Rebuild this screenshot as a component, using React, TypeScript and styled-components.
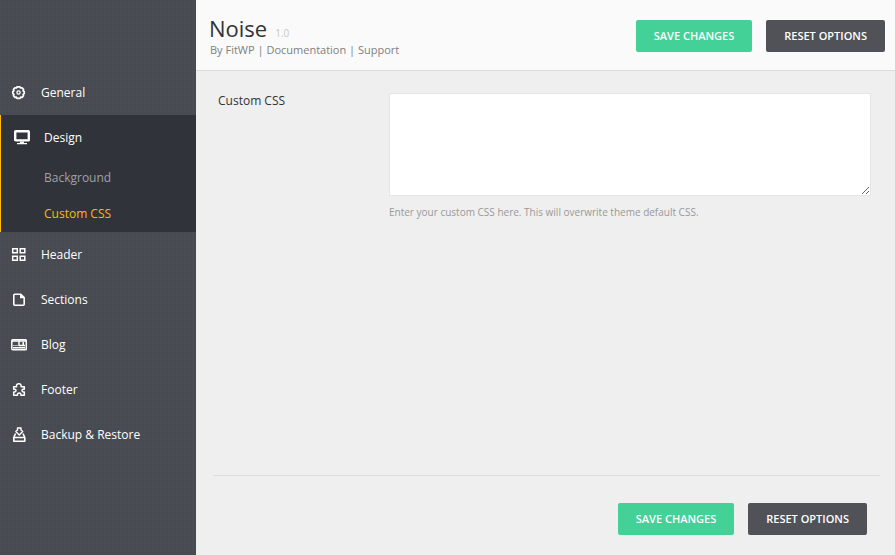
import React from "react";
import styled, { createGlobalStyle } from "styled-components";

const GlobalStyle = createGlobalStyle`
  *, *::before, *::after { box-sizing: border-box; }
  body {
    margin: 0;
    background: #efefef;
    font-family: "Open Sans", "Noto Sans", sans-serif;
    font-size: 12px;
    color: #333;
  }
`;

const Layout = styled.div`
  display: flex;
  min-height: 100vh;
`;

const Sidebar = styled.nav`
  flex: 0 0 196px;
  padding-top: 70px;
  background-color: #4a4c54;
  background-image: conic-gradient(#474951 25%, transparent 0);
  background-size: 4px 4px;
`;

const Menu = styled.ul`
  list-style: none;
  margin: 0;
  padding: 0;
`;

const MenuItem = styled.li<{ $open?: boolean }>`
  ${(p) => p.$open && "background: #31333b; border-left: 1px solid #ffba00;"}
`;

const MenuLink = styled.a<{ $open?: boolean }>`
  display: flex;
  align-items: center;
  gap: 14px;
  height: 45px;
  padding-left: ${(p) => (p.$open ? 12 : 10)}px;
  color: #fff;
  font-weight: 500;
  text-decoration: none;

  svg { flex: none; }
`;

const SubLink = styled.a<{ $current?: boolean }>`
  display: flex;
  align-items: center;
  height: 36px;
  padding: 0 0 2px 43px;
  color: ${(p) => (p.$current ? "#ffba00" : "#a0a1a5")};
  text-decoration: none;
`;

const Main = styled.main`
  flex: 1;
  min-width: 0;
  display: flex;
  flex-direction: column;
`;

const Header = styled.header`
  display: flex;
  justify-content: space-between;
  align-items: flex-start;
  padding: 14px 10px 12px 13px;
  background: #fafafa;
  border-bottom: 1px solid #dcdcdc;
`;

const Title = styled.h1`
  margin: 0;
  font-size: 22px;
  line-height: 28px;
  font-weight: 400;
  color: #333;
`;

const Version = styled.small`
  margin-left: 8px;
  font-size: 10px;
  line-height: 1;
  color: #c8c8c8;
`;

const Links = styled.div`
  padding-left: 1px;
  font-size: 11px;
  line-height: 16px;
  color: #808080;

  a { color: inherit; text-decoration: none; }
`;

const Actions = styled.div`
  display: flex;
  gap: 14px;
`;

const HeaderActions = styled(Actions)`
  padding-top: 6px;
`;

const Button = styled.button<{ $primary?: boolean }>`
  height: 32px;
  padding: 0 18px;
  border: 0;
  border-radius: 2px;
  background: ${(p) => (p.$primary ? "#44d197" : "#515258")};
  color: #fff;
  font: 600 11px/32px "Open Sans", "Noto Sans", sans-serif;
  white-space: nowrap;
  cursor: pointer;
`;

const Field = styled.div`
  display: flex;
  flex: 1;
  padding: 22px 24px 24px 22px;
`;

const Label = styled.label`
  flex: 0 0 171px;
  line-height: 16px;
  font-weight: 500;
`;

const Control = styled.div`
  flex: 1;
  min-width: 0;
`;

const TextArea = styled.textarea`
  display: block;
  width: 100%;
  height: 103px;
  padding: 8px;
  border: 1px solid #e5e5e5;
  background: #fff;
  font: inherit;
  resize: both;
`;

const Help = styled.p`
  margin: 8px 0 0;
  font-size: 10px;
  line-height: 16px;
  font-weight: 500;
  color: #999;
`;

const Footer = styled.footer`
  display: flex;
  justify-content: flex-end;
  margin: 0 15px 0 18px;
  padding: 27px 13px 20px;
  border-top: 1px solid #dcdcdc;
`;

type IconName = "gear" | "screen" | "grid" | "page" | "card" | "puzzle" | "backup";

const drawings: Record<IconName, React.ReactNode> = {
  gear: (
    <>
      <path
        d="M7 2.800h3l.6 1.200 1.500-.2 1.400 1.600-.4 1.400 1.100.8v2l-1.100.8.4 1.400-1.400 1.600-1.500-.2-.6 1.200H7l-.6-1.200-1.500.2-1.400-1.600.4-1.400-1.100-.8v-2l1.100-.8-.4-1.400 1.400-1.600 1.500.2z"
        strokeWidth="1.700"
        strokeLinejoin="round"
      />
      <circle cx="8.500" cy="8.500" r="1.600" strokeWidth="1.300" />
    </>
  ),
  screen: (
    <>
      <rect x="2.200" y="2.200" width="13.600" height="9.200" rx="0.500" strokeWidth="2.400" />
      <path d="M7 12.500h4v1.500H7zM4 14h10v1.200H4z" fill="#fff" stroke="none" />
    </>
  ),
  grid: (
    <path d="M2.700 2.700h4.600v4.100H2.700zM10.200 2.700h4.600v4.100h-4.600zM2.700 10.200h4.600v4.100H2.700zM10.200 10.200h4.600v4.100h-4.600z" strokeWidth="1.500" />
  ),
  page: (
    <>
      <path d="M4.800 3.300h6l3.400 3.400v6.500a1 1 0 0 1-1 1H4.800a1 1 0 0 1-1-1V4.300a1 1 0 0 1 1-1z" strokeWidth="1.600" />
      <path d="M10 3v4.200h4.500z" fill="#fff" stroke="none" />
    </>
  ),
  card: (
    <>
      <rect x="1.800" y="3.800" width="14.500" height="10" rx="1" strokeWidth="1.500" />
      <path d="M2 5h14M9 5v5M13.200 6v3M9 9.500h6M3 11.700h12" strokeWidth="1.500" />
      <path d="M3 9.500h5" strokeWidth="0.600" />
    </>
  ),
  puzzle: (
    <path
      d="M3.700 5.700h2.800V4.500a2.300 1.800 0 0 1 4.600 0v1.200h3.200v2.600h-1a1.300 1.300 0 0 0 0 2.600h1v3.400h-3.400v-1a1.500 1.200 0 0 0-3.400 0v1H3.700v-3.400h1a1.300 1.300 0 0 0 0-2.600h-1z"
      strokeWidth="1.500"
      strokeLinejoin="round"
    />
  ),
  backup: (
    <>
      <path d="M5.800 5.500L7.500 4V2h3.500v2l1.700 1.500-3.500 3.500z" strokeWidth="1.400" strokeLinejoin="round" />
      <path d="M5.500 7.500L3.800 11.500v3.700h11v-3.700L13 7.500M3.800 11.500h11" strokeWidth="1.600" strokeLinejoin="round" />
    </>
  ),
};

const Icon = ({ name }: { name: IconName }) => (
  <svg width="17" height="17" viewBox="0 0 17 17" fill="none" stroke="#fff" aria-hidden="true">
    {drawings[name]}
  </svg>
);

const items: { icon: IconName; label: string; children?: string[] }[] = [
  { icon: "gear", label: "General" },
  { icon: "screen", label: "Design", children: ["Background", "Custom CSS"] },
  { icon: "grid", label: "Header" },
  { icon: "page", label: "Sections" },
  { icon: "card", label: "Blog" },
  { icon: "puzzle", label: "Footer" },
  { icon: "backup", label: "Backup & Restore" },
];

const Buttons = () => (
  <>
    <Button type="submit" $primary>SAVE CHANGES</Button>
    <Button type="reset">RESET OPTIONS</Button>
  </>
);

export default function App() {
  return (
    <>
      <GlobalStyle />
      <Layout>
        <Sidebar>
          <Menu>
            {items.map(({ icon, label, children }) => (
              <MenuItem key={label} $open={!!children}>
                <MenuLink href="#" $open={!!children}>
                  <Icon name={icon} />
                  {label}
                </MenuLink>
                {children && (
                  <Menu>
                    {children.map((child) => (
                      <li key={child}>
                        <SubLink href="#" $current={child === "Custom CSS"}>{child}</SubLink>
                      </li>
                    ))}
                  </Menu>
                )}
              </MenuItem>
            ))}
          </Menu>
        </Sidebar>
        <Main>
          <Header>
            <div>
              <Title>Noise<Version>1.0</Version></Title>
              <Links>
                By <a href="#">FitWP</a> | <a href="#">Documentation</a> | <a href="#">Support</a>
              </Links>
            </div>
            <HeaderActions>
              <Buttons />
            </HeaderActions>
          </Header>
          <Field>
            <Label htmlFor="custom-css">Custom CSS</Label>
            <Control>
              <TextArea id="custom-css" aria-describedby="custom-css-help" />
              <Help id="custom-css-help">Enter your custom CSS here. This will overwrite theme default CSS.</Help>
            </Control>
          </Field>
          <Footer>
            <Actions>
              <Buttons />
            </Actions>
          </Footer>
        </Main>
      </Layout>
    </>
  );
}
